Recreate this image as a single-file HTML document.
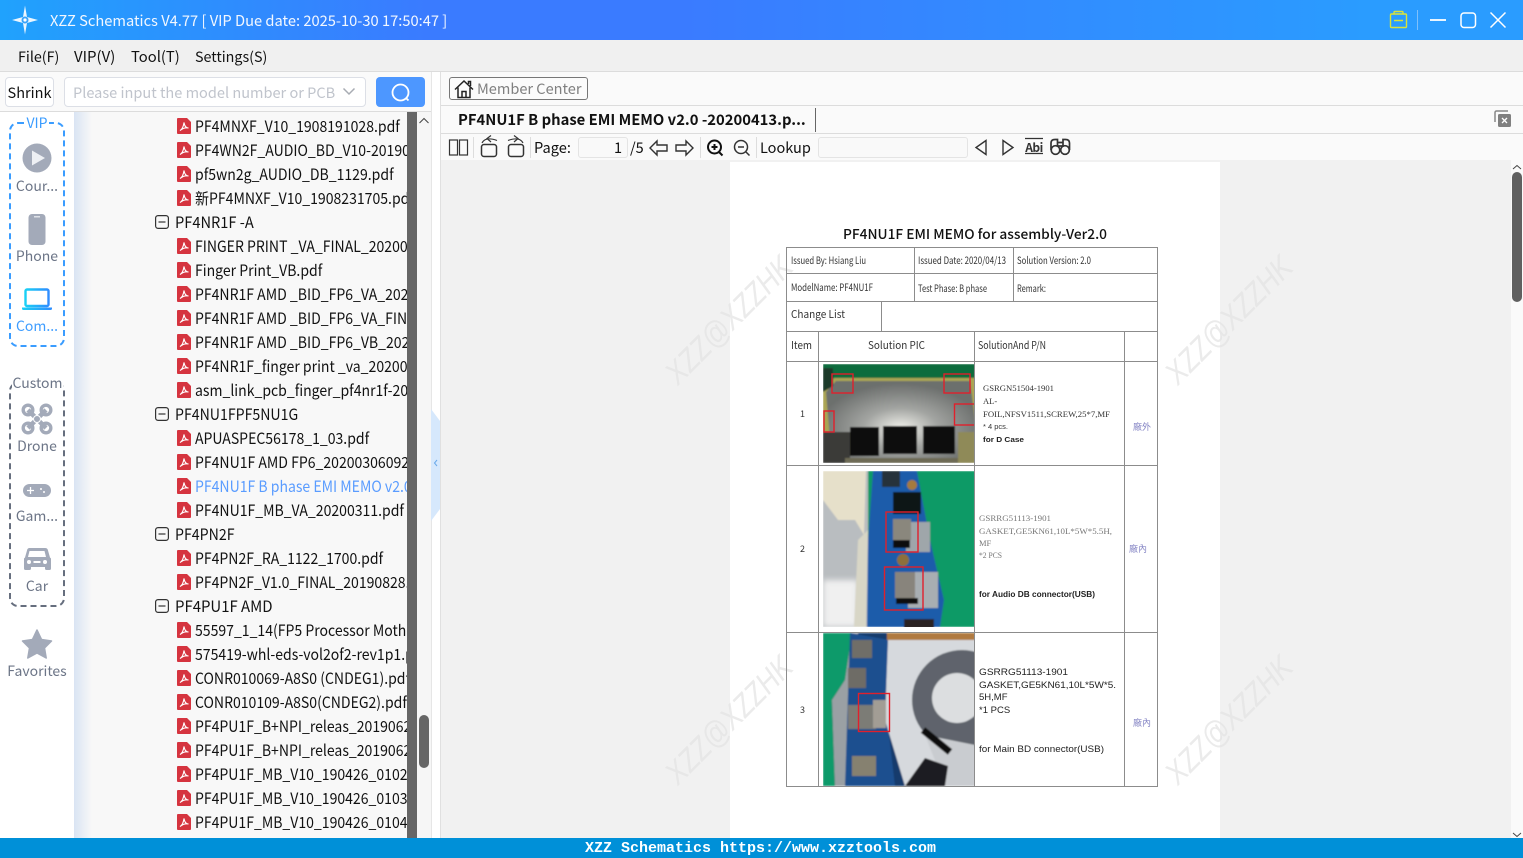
<!DOCTYPE html>
<html><head><meta charset="utf-8"><title>XZZ Schematics</title>
<style>
*{box-sizing:border-box}
html,body{margin:0;padding:0;width:1523px;height:858px;overflow:hidden;background:#fafafa}
body{font-family:"Noto Sans CJK SC","Liberation Sans",sans-serif;color:#111;position:relative}
.a{position:absolute}
.t{position:absolute;white-space:nowrap;line-height:24px;height:24px;font-size:15px}
#title{left:0;top:0;width:1523px;height:40px;background:linear-gradient(90deg,#20a2fd 0,#3a7bff 28%,#3a7bff 45%,#2a9cff 90%,#2a9cff 100%)}
#menu{left:0;top:40px;width:1523px;height:32px;background:#f0f0f0;border-bottom:1px solid #dcdcdc}
#left{left:0;top:72px;width:431px;height:766px;background:#fafafa;overflow:hidden}
#tree{left:74px;top:112px;width:333px;height:726px;background:linear-gradient(90deg,#d9e4f3 0,#f8f8f8 18px);overflow:hidden}
#tree .t{font-size:15.4px;color:#111;transform:scaleX(.912);transform-origin:0 0}
.dash{position:absolute;left:9px;width:56px;border-radius:9px;border:2px dashed}
.lb{position:absolute;left:0;width:74px;text-align:center;font-size:14px;color:#6c7587;line-height:20px;white-space:nowrap}
</style></head><body>
<svg width="0" height="0" style="position:absolute"><defs>
<symbol id="pdf" viewBox="0 0 14 16"><path d="M1 0H10L14 4V15a1 1 0 0 1-1 1H1a1 1 0 0 1-1-1V1a1 1 0 0 1 1-1z" fill="#d5343f"/><path d="M3 12.500C5 11.500 6.500 8 7 4.500 7.500 8 9 10 11.500 10 9 9.500 6 10 3 12.500z" fill="none" stroke="#fff" stroke-width="1.100"/></symbol>
<symbol id="minus" viewBox="0 0 14 14"><rect x=".6" y=".6" width="12.800" height="12.800" rx="2.500" fill="none" stroke="#333" stroke-width="1.200"/><path d="M3.500 7h7" stroke="#333" stroke-width="1.200"/></symbol>
<linearGradient id="lap" x1="0" x2="1"><stop offset="0" stop-color="#18d0f5"/><stop offset="1" stop-color="#2f8dff"/></linearGradient>
<filter id="b0"><feGaussianBlur stdDeviation=".7"/></filter>
<filter id="b1"><feGaussianBlur stdDeviation="1.200"/></filter>
<filter id="b2"><feGaussianBlur stdDeviation="3"/></filter>
<clipPath id="c1"><rect x="823" y="364" width="152" height="99"/></clipPath>
<clipPath id="c2"><rect x="823" y="471" width="152" height="156"/></clipPath>
<clipPath id="c3"><rect x="823" y="633" width="152" height="153"/></clipPath>
<radialGradient id="metal" cx=".5" cy=".58" r=".55"><stop offset="0" stop-color="#f2f2ec"/><stop offset=".45" stop-color="#a3a5a2"/><stop offset="1" stop-color="#6c6f6d"/></radialGradient>
</defs></svg>

<div id="title" class="a"></div>
<svg class="a" style="left:0;top:0" width="60" height="40"><path d="M25 5.500 27 17 38 20 27 23 25 34.500 23 23 12 20 23 17z" fill="#eaf6ff"/><circle cx="25" cy="20" r="3.500" fill="#3aa4fb"/><circle cx="25" cy="20" r="1.600" fill="#fff"/></svg>
<div class="t" style="left:50px;top:9px;color:#f2f7ff;font-size:14.680px">XZZ Schematics V4.77 [ VIP Due date: 2025-10-30 17:50:47 ]</div>
<svg class="a" style="left:1380px;top:0" width="143" height="40" fill="none">
<path d="M11.500 14h14a1 1 0 0 1 1 1v11.500a1 1 0 0 1-1 1h-14a1 1 0 0 1-1-1V15a1 1 0 0 1 1-1zM14 14v-1.500a1 1 0 0 1 1-1h7a1 1 0 0 1 1 1V14M14 20.500h9" stroke="#d9e33a" stroke-width="1.400"/>
<path d="M37.500 10v20" stroke="#7fc0fb" stroke-width="1"/>
<path d="M50 20h16" stroke="#fff" stroke-width="1.800"/>
<rect x="81" y="13" width="14.500" height="14.500" rx="3" stroke="#fff" stroke-width="1.500"/>
<path d="M110.500 12.500 125.500 27.500M125.500 12.500 110.500 27.500" stroke="#fff" stroke-width="1.500"/>
</svg>

<div id="menu" class="a"></div>
<div class="t" style="left:18px;top:45px;font-size:14.300px">File(F)</div>
<div class="t" style="left:74px;top:45px">VIP(V)</div>
<div class="t" style="left:131px;top:45px;font-size:14.800px">Tool(T)</div>
<div class="t" style="left:195px;top:45px;font-size:14.300px">Settings(S)</div>

<div id="left" class="a"></div>
<div class="a" style="left:5px;top:77px;width:49px;height:30px;background:#fff;border:1px solid #dcdfe6;border-radius:4px;text-align:center;font-size:14.500px;line-height:29px">Shrink</div>
<div class="a" style="left:64px;top:77px;width:302px;height:30px;background:#fff;border:1px solid #dcdfe6;border-radius:4px"></div>
<div class="t" style="left:73px;top:81px;color:#c0c4cc;font-size:14.550px">Please input the model number or PCB</div>
<svg class="a" style="left:340px;top:84px" width="18" height="16" fill="none"><path d="M3.500 4.500 9 10 14.500 4.500" stroke="#a8acb3" stroke-width="1.500"/></svg>
<div class="a" style="left:376px;top:77px;width:49px;height:30px;background:#4d97ff;border-radius:4px"></div>
<svg class="a" style="left:388px;top:81px" width="26" height="24" fill="none"><circle cx="12.500" cy="11.500" r="8" stroke="#fff" stroke-width="1.800"/><path d="M18 17l2.500 2.500" stroke="#fff" stroke-width="1.800"/></svg>
<div class="a" style="left:0;top:111px;width:431px;height:1px;background:#dcdcdc"></div>

<!-- sidebar -->
<div class="a" style="left:0;top:112px;width:74px;height:726px;background:#fff"></div>
<div class="dash" style="top:122px;height:225px;border-color:#3a9cff"></div>
<div class="lb" style="top:113px;color:#3a9cff"><span style="background:#fff;padding:0 1px">VIP</span></div>
<div class="dash" style="top:382px;height:225px;border-color:#666e7e"></div>
<div class="lb" style="top:373px;padding-left:1px"><span style="background:#fff">Custom</span></div>
<div class="lb" style="top:176px">Cour...</div>
<div class="lb" style="top:246px">Phone</div>
<div class="lb" style="top:316px;color:#3f9dff">Com...</div>
<div class="lb" style="top:436px">Drone</div>
<div class="lb" style="top:506px">Gam...</div>
<div class="lb" style="top:576px">Car</div>
<div class="lb" style="top:661px">Favorites</div>
<svg class="a" style="left:0;top:112px" width="74" height="726">
<circle cx="37" cy="46" r="14.500" fill="#a3aab9"/><path d="M32 38.500 45 46 32 53.500z" fill="#eef0f4"/>
<rect x="28.500" y="102" width="17" height="31" rx="3.500" fill="#a3aab9"/><rect x="34" y="104" width="6" height="1.500" fill="#dfe2e8"/>
<rect x="25.500" y="177.500" width="23" height="16.500" rx="1.500" fill="none" stroke="url(#lap)" stroke-width="2.400"/><path d="M22 195.500h30v1a1.500 1.500 0 0 1-1.500 1.500h-27A1.500 1.500 0 0 1 22 196.500z" fill="url(#lap)"/>
<g fill="none" stroke="#a3aab9"><path d="M28 298l18 18M46 298l-18 18" stroke-width="4.500"/><circle cx="28" cy="298" r="4.800" stroke-width="3.400"/><circle cx="46" cy="298" r="4.800" stroke-width="3.400"/><circle cx="28" cy="316" r="4.800" stroke-width="3.400"/><circle cx="46" cy="316" r="4.800" stroke-width="3.400"/></g><circle cx="37" cy="307" r="3.500" fill="#a3aab9" stroke="#fff" stroke-width="1"/>
<rect x="23" y="372" width="28" height="13" rx="6.500" fill="#a3aab9"/><path d="M27 378.500h7M30.500 375v7" stroke="#fff" stroke-width="1.300"/><circle cx="41" cy="377" r="1" fill="#fff"/><circle cx="44" cy="380" r="1" fill="#fff"/>
<path d="M29 436h16a3 3 0 0 1 3 2.500l2 7 1 1v10a1.500 1.500 0 0 1-1.500 1.500h-3a1.500 1.500 0 0 1-1.500-1.500V455H31v1.500a1.500 1.500 0 0 1-1.500 1.500h-4A1.500 1.500 0 0 1 24 456.500v-10l1-1 2-7a3 3 0 0 1 2-2.500z" fill="#a3aab9"/><path d="M29.500 439h15l1.500 6H28z" fill="#fff"/><circle cx="29" cy="450" r="2" fill="#fff"/><circle cx="45" cy="450" r="2" fill="#fff"/><rect x="33.500" y="449" width="7" height="2" fill="#fff"/>
<path d="M37 518l4.500 9.500 10 1.500-7 7 1.700 10L37 541l-9.200 5 1.700-10-7-7 10-1.500z" fill="#a3aab9" stroke="#a3aab9" stroke-width="1.500" stroke-linejoin="round"/>
</svg>

<!-- tree -->
<div id="tree" class="a">
<svg class="a" style="left:0;top:0" width="334" height="726">
<use href="#pdf" x="103" y="6" width="14" height="16"/><use href="#pdf" x="103" y="30" width="14" height="16"/><use href="#pdf" x="103" y="54" width="14" height="16"/><use href="#pdf" x="103" y="78" width="14" height="16"/>
<use href="#minus" x="81" y="103" width="14" height="14"/>
<use href="#pdf" x="103" y="126" width="14" height="16"/><use href="#pdf" x="103" y="150" width="14" height="16"/><use href="#pdf" x="103" y="174" width="14" height="16"/><use href="#pdf" x="103" y="198" width="14" height="16"/><use href="#pdf" x="103" y="222" width="14" height="16"/><use href="#pdf" x="103" y="246" width="14" height="16"/><use href="#pdf" x="103" y="270" width="14" height="16"/>
<use href="#minus" x="81" y="295" width="14" height="14"/>
<use href="#pdf" x="103" y="318" width="14" height="16"/><use href="#pdf" x="103" y="342" width="14" height="16"/><use href="#pdf" x="103" y="366" width="14" height="16"/><use href="#pdf" x="103" y="390" width="14" height="16"/>
<use href="#minus" x="81" y="415" width="14" height="14"/>
<use href="#pdf" x="103" y="438" width="14" height="16"/><use href="#pdf" x="103" y="462" width="14" height="16"/>
<use href="#minus" x="81" y="487" width="14" height="14"/>
<use href="#pdf" x="103" y="510" width="14" height="16"/><use href="#pdf" x="103" y="534" width="14" height="16"/><use href="#pdf" x="103" y="558" width="14" height="16"/><use href="#pdf" x="103" y="582" width="14" height="16"/><use href="#pdf" x="103" y="606" width="14" height="16"/><use href="#pdf" x="103" y="630" width="14" height="16"/><use href="#pdf" x="103" y="654" width="14" height="16"/><use href="#pdf" x="103" y="678" width="14" height="16"/><use href="#pdf" x="103" y="702" width="14" height="16"/>
</svg>
<div class="t" style="left:121px;top:2px">PF4MNXF_V10_1908191028.pdf</div>
<div class="t" style="left:121px;top:26px">PF4WN2F_AUDIO_BD_V10-20190820.pdf</div>
<div class="t" style="left:121px;top:50px">pf5wn2g_AUDIO_DB_1129.pdf</div>
<div class="t" style="left:121px;top:74px">新PF4MNXF_V10_1908231705.pdf</div>
<div class="t" style="left:101px;top:98px;transform:scaleX(.95)">PF4NR1F -A</div>
<div class="t" style="left:121px;top:122px">FINGER PRINT _VA_FINAL_20200224.pdf</div>
<div class="t" style="left:121px;top:146px">Finger Print_VB.pdf</div>
<div class="t" style="left:121px;top:170px">PF4NR1F AMD _BID_FP6_VA_20200224.pdf</div>
<div class="t" style="left:121px;top:194px">PF4NR1F AMD _BID_FP6_VA_FINAL.pdf</div>
<div class="t" style="left:121px;top:218px">PF4NR1F AMD _BID_FP6_VB_20200224.pdf</div>
<div class="t" style="left:121px;top:242px">PF4NR1F_finger print _va_20200224.pdf</div>
<div class="t" style="left:121px;top:266px">asm_link_pcb_finger_pf4nr1f-20200224.pdf</div>
<div class="t" style="left:101px;top:290px;transform:scaleX(.918)">PF4NU1FPF5NU1G</div>
<div class="t" style="left:121px;top:314px">APUASPEC56178_1_03.pdf</div>
<div class="t" style="left:121px;top:338px">PF4NU1F AMD FP6_20200306092.pdf</div>
<div class="t" style="left:121px;top:362px;color:#5a9cff">PF4NU1F B phase EMI MEMO v2.0 -20200413.pdf</div>
<div class="t" style="left:121px;top:386px">PF4NU1F_MB_VA_20200311.pdf</div>
<div class="t" style="left:101px;top:410px;transform:scaleX(.92)">PF4PN2F</div>
<div class="t" style="left:121px;top:434px">PF4PN2F_RA_1122_1700.pdf</div>
<div class="t" style="left:121px;top:458px">PF4PN2F_V1.0_FINAL_20190828.pdf</div>
<div class="t" style="left:101px;top:482px;transform:scaleX(.97)">PF4PU1F AMD</div>
<div class="t" style="left:121px;top:506px">55597_1_14(FP5 Processor Motherboard).pdf</div>
<div class="t" style="left:121px;top:530px">575419-whl-eds-vol2of2-rev1p1.pdf</div>
<div class="t" style="left:121px;top:554px">CONR010069-A8S0 (CNDEG1).pdf</div>
<div class="t" style="left:121px;top:578px">CONR010109-A8S0(CNDEG2).pdf</div>
<div class="t" style="left:121px;top:602px">PF4PU1F_B+NPI_releas_20190620.pdf</div>
<div class="t" style="left:121px;top:626px">PF4PU1F_B+NPI_releas_20190621.pdf</div>
<div class="t" style="left:121px;top:650px">PF4PU1F_MB_V10_190426_0102.pdf</div>
<div class="t" style="left:121px;top:674px">PF4PU1F_MB_V10_190426_0103.pdf</div>
<div class="t" style="left:121px;top:698px">PF4PU1F_MB_V10_190426_0104.pdf</div>
</div>
<div class="a" style="left:407px;top:112px;width:10px;height:726px;background:#666"></div>
<div class="a" style="left:417px;top:112px;width:14px;height:726px;background:#f6f6f6"></div>
<div class="a" style="left:419px;top:715px;width:10px;height:53px;border-radius:5px;background:#666"></div>
<svg class="a" style="left:417px;top:112px" width="14" height="16" fill="none"><path d="M2.500 11 7 6.500 11.500 11" stroke="#444" stroke-width="1"/></svg>

<!-- splitter -->
<div class="a" style="left:431px;top:72px;width:10px;height:766px;background:#fff;border-left:1px solid #e6e6e6;border-right:1px solid #e0e0e0"></div>
<svg class="a" style="left:431px;top:405px" width="10" height="120"><path d="M0 4 9 16V104L0 116z" fill="#d6e8fc"/><path d="M6 55 3.500 58 6 61" fill="none" stroke="#6aa9ea" stroke-width="1"/></svg>

<!-- right pane -->
<div class="a" style="left:441px;top:72px;width:1082px;height:88px;background:#fafafa"></div>
<div class="a" style="left:441px;top:105px;width:1082px;height:1px;background:#dcdcdc"></div>
<div class="a" style="left:441px;top:133px;width:1082px;height:1px;background:#dcdcdc"></div>
<div class="a" style="left:449px;top:77px;width:139px;height:23px;background:#fbfbfb;border:1px solid #777;border-radius:3px"></div>
<svg class="a" style="left:453px;top:78px" width="22" height="22" fill="none" stroke="#222" stroke-width="1.500"><path d="M2 11.500 11 3l9 8.500M5 9.500V19.500H17V9.500M9 19.500V13.500H13V19.500M15.500 6V3.500H17.500V8"/></svg>
<div class="t" style="left:477px;top:77px;color:#808080;font-size:14.550px">Member Center</div>
<div class="t" style="left:458px;top:108px;font-weight:700;font-size:14.800px;color:#111">PF4NU1F B phase EMI MEMO v2.0 -20200413.p...</div>
<div class="a" style="left:815px;top:108px;width:1px;height:24px;background:#666"></div>
<svg class="a" style="left:1493px;top:109px" width="20" height="20"><path d="M2 13V3.500A1.500 1.500 0 0 1 3.500 2H15" fill="none" stroke="#888" stroke-width="1.500"/><rect x="5" y="5" width="13" height="13" rx="1.500" fill="#808080"/><path d="M9 9l5 5M14 9l-5 5" stroke="#fff" stroke-width="1.300"/></svg>

<svg class="a" style="left:441px;top:134px" width="640" height="28" fill="none" stroke="#333" stroke-width="1.200">
<rect x="8.500" y="6" width="8" height="15"/><rect x="18.500" y="6" width="8" height="15"/>
<path d="M32.500 3V24M89.500 3V24M259.500 3V24M315.500 3V24" stroke="#ddd" stroke-width="1"/>
<rect x="40.500" y="10.500" width="15" height="12" rx="2.500" stroke-width="1.500"/><path d="M41 9C43 5 48 3.500 56 6.500M50 1.500 46 4.500l4 3.500" stroke-width="1.200"/>
<rect x="67.500" y="10.500" width="15" height="12" rx="2.500" stroke-width="1.500"/><path d="M82 9C80 5 75 3.500 67 6.500M73 1.500 77 4.500l-4 3.500" stroke-width="1.200"/>
<path d="M209 14l7-7v4h10v6h-10v4z" stroke-width="1.400"/><path d="M252 14l-7-7v4h-10v6h10v4z" stroke-width="1.400"/>
<circle cx="273.500" cy="13" r="6.500" stroke="#111" stroke-width="2"/><path d="M278 18l3.500 3.500M270.500 13h6M273.500 10v6" stroke="#111" stroke-width="2"/>
<circle cx="300" cy="13" r="6.500" stroke-width="1.500"/><path d="M305 18l3.500 3.500M297 13h6" stroke-width="1.500"/>
<path d="M545 6.500 535 13.500 545 20.500zM562 6.500 572 13.500 562 20.500z" stroke-width="1.400"/>
<path d="M584 4.500h18M584 19.500h18" stroke-width="1.200"/>
<circle cx="614.500" cy="16" r="4.300" stroke-width="1.700"/><circle cx="624" cy="16" r="4.300" stroke-width="1.700"/>
<path d="M610 16V9Q610 5.500 614 5.500H616.500V13M628.500 16V9Q628.500 5.500 624.500 5.500H622V13M616.500 8.500H622M616.500 12H622" stroke-width="1.700"/>
</svg>
<div class="t" style="left:534px;top:136px;font-size:14.600px">Page:</div>
<div class="a" style="left:578px;top:137px;width:50px;height:21px;background:#f9f9f9;border:1px solid #e4e4e4;border-radius:3px"></div>
<div class="t" style="left:614px;top:136px;font-size:14.500px">1</div>
<div class="t" style="left:630px;top:136px;font-size:14.500px">/5</div>
<div class="t" style="left:760px;top:136px;font-size:14.500px">Lookup</div>
<div class="a" style="left:818px;top:137px;width:150px;height:21px;background:#f9f9f9;border:1px solid #e4e4e4;border-radius:3px"></div>
<div class="t" style="left:1025px;top:136px;font-size:12px;font-weight:700;letter-spacing:-.5px;color:#333;width:18px;text-align:center">Abi</div>

<!-- viewer -->
<div class="a" style="left:441px;top:160px;width:1070px;height:678px;background:#f1f1f1"></div>
<div class="a" style="left:730px;top:162px;width:490px;height:676px;background:#fff"></div>
<div class="a" style="left:1511px;top:160px;width:12px;height:678px;background:#fafafa"></div>
<div class="a" style="left:1512px;top:172px;width:10px;height:130px;border-radius:5px;background:#606060"></div>
<svg class="a" style="left:1511px;top:162px" width="12" height="10" fill="none"><path d="M2 7 6 3.500 10 7" stroke="#444"/></svg>
<svg class="a" style="left:1511px;top:830px" width="12" height="8" fill="none"><path d="M2 3 6 6.500 10 3" stroke="#444"/></svg>

<!-- document -->
<svg class="a" style="left:0;top:0" width="1523" height="858" font-family="'Liberation Sans',sans-serif">
<g font-family="'Liberation Sans',sans-serif" font-size="32" font-style="italic" fill="#e2e2e2" opacity=".7">
<text transform="translate(678,386) rotate(-45)" textLength="165" lengthAdjust="spacingAndGlyphs">XZZ@XZZHK</text>
<text transform="translate(1178,386) rotate(-45)" textLength="165" lengthAdjust="spacingAndGlyphs">XZZ@XZZHK</text>
<text transform="translate(678,786) rotate(-45)" textLength="165" lengthAdjust="spacingAndGlyphs">XZZ@XZZHK</text>
<text transform="translate(1178,786) rotate(-45)" textLength="165" lengthAdjust="spacingAndGlyphs">XZZ@XZZHK</text>
</g>
<text x="843" y="239" font-family="'Noto Sans CJK SC',sans-serif" font-size="13.500" font-weight="500" fill="#111" textLength="264" lengthAdjust="spacingAndGlyphs">PF4NU1F EMI MEMO for assembly-Ver2.0</text>

<!-- photo 1 -->
<g clip-path="url(#c1)">
<g filter="url(#b0)">
<rect x="823" y="364" width="152" height="99" fill="#0d6c3c"/>
<path d="M823 386 834 378H975V463H823z" fill="#aaa552"/>
<path d="M826 392 836 381H970L975 420V463H832z" fill="url(#metal)"/>
<path d="M823 368H833V386L823 392z" fill="#1a3b2a"/>
<path d="M823 432H850V463H823z" fill="#3b3b38"/>
<path d="M958 432H975V463H958z" fill="#8f8a58"/>
<rect x="850" y="427" width="29" height="29" fill="#0b0b0d"/><rect x="883" y="426" width="34" height="28" fill="#0b0b0d"/><rect x="923" y="426" width="32" height="28" fill="#0b0b0d"/>
<path d="M845 458H958V463H845z" fill="#6d6a55"/>
</g>
<g fill="none" stroke="#e0202c" stroke-width="1.400"><rect x="832" y="374" width="21" height="19"/><rect x="944" y="374" width="26" height="19"/><rect x="954.500" y="404" width="21" height="21"/><rect x="824" y="411" width="10" height="21"/></g>
</g>
<!-- photo 2 -->
<g clip-path="url(#c2)">
<g filter="url(#b0)">
<rect x="823" y="471" width="152" height="156" fill="#0f9a66"/>
<path d="M823 471H868V627H823z" fill="#b9bdc0"/>
<path d="M823 471H866L864 535 855 520H838L823 500z" fill="#e6e0ca"/>
<path d="M823 580H858V627H823z" fill="#f0f0f0" filter="url(#b2)"/>
<path d="M873 471H917L930 540 944 600 940 627H867L868 540z" fill="#1d5caa"/>
<path d="M858 540 868 530 866 627H854z" fill="#d8d6c6"/>
<rect x="882" y="471" width="18" height="16" fill="#27303a"/><circle cx="912" cy="485" r="5" fill="#a57a3c"/>
<rect x="893" y="492" width="28" height="22" fill="#111214"/>
<rect x="906" y="522" width="24" height="30" fill="#9fa6aa"/>
<rect x="893" y="519" width="18" height="21" fill="#8a877d"/><rect x="893" y="540" width="17" height="8" fill="#0c0c0e"/>
<circle cx="903" cy="560" r="6" fill="#8d6f3a"/>
<rect x="908" y="572" width="30" height="36" fill="#a8aeb2"/>
<rect x="895" y="572" width="20" height="26" fill="#88847c"/><rect x="896" y="598" width="22" height="6" fill="#0c0c0e"/>
<rect x="904" y="619" width="30" height="9" fill="#2a2320"/>
</g>
<g fill="none" stroke="#e0202c" stroke-width="1.400"><rect x="886" y="512" width="32" height="40"/><rect x="884.500" y="567" width="38.500" height="43"/></g>
</g>
<!-- photo 3 -->
<g clip-path="url(#c3)">
<g filter="url(#b0)">
<rect x="823" y="633" width="152" height="153" fill="#123a6c"/>
<path d="M823 633H852L845 680 832 700 835 786H823z" fill="#0c9a6b"/>
<path d="M832 700 845 680 852 633 858 633 845 786H835z" fill="#9aa0a4"/>
<path d="M845 786 850 633 890 640 885 700 895 786z" fill="#1c4f8f"/>
<rect x="852" y="640" width="20" height="18" fill="#6f6e68"/><rect x="848" y="668" width="18" height="20" fill="#6e6c66"/><rect x="848" y="705" width="28" height="24" fill="#7c7c76"/><rect x="852" y="756" width="24" height="20" fill="#86816f"/>
<path d="M888 640H975V786H905L885 720z" fill="#d6d9dd"/>
<rect x="887" y="633" width="88" height="7" fill="#b07a40"/>
<circle cx="962" cy="700" r="50" fill="#5e646c"/><circle cx="957" cy="698" r="25" fill="#dcdee0"/>
<path d="M925 735 975 745V786H945z" fill="#c9ccd0"/>
<path d="M905 786 925 758 948 766 945 786z" fill="#1e1e20"/>
<rect x="873" y="700" width="13" height="28" fill="#a29d95"/>
<path d="M923 730 950 752" stroke="#111" stroke-width="7"/>
</g>
<rect x="858.500" y="693.500" width="31" height="38" fill="none" stroke="#e0202c" stroke-width="1.400"/>
</g>

<g stroke="#8c8c8c" stroke-width="1" fill="none">
<rect x="786.500" y="247.500" width="371" height="539"/>
<path d="M787 273.500H1157M787 301.500H1157M787 331.500H1157M787 361.500H1157M787 465.500H1157M787 632.500H1157"/>
<path d="M914.500 247V301M1013.500 247V301M881.500 301V331M818.500 331V786M974.500 331V786M1124.500 331V786"/>
</g>

<g fill="#333" font-size="10" font-family="'Noto Sans CJK SC',sans-serif">
<text x="791" y="264" font-size="10" textLength="75" lengthAdjust="spacingAndGlyphs">Issued By: Hsiang Liu</text>
<text x="918" y="264" textLength="88" lengthAdjust="spacingAndGlyphs">Issued Date: 2020/04/13</text>
<text x="1017" y="264" textLength="74" lengthAdjust="spacingAndGlyphs">Solution Version: 2.0</text>
<text x="791" y="291" textLength="82" lengthAdjust="spacingAndGlyphs">ModelName: PF4NU1F</text>
<text x="918" y="292" textLength="69" lengthAdjust="spacingAndGlyphs">Test Phase: B phase</text>
<text x="1017" y="292" textLength="29" lengthAdjust="spacingAndGlyphs">Remark:</text>
<text x="791" y="318" font-size="10.500" textLength="54" lengthAdjust="spacingAndGlyphs">Change List</text>
<text x="791" y="349" font-size="10.500" textLength="21" lengthAdjust="spacingAndGlyphs">Item</text>
<text x="868" y="349" font-size="10.500" textLength="57" lengthAdjust="spacingAndGlyphs">Solution PIC</text>
<text x="978" y="349" font-size="10.500" textLength="68" lengthAdjust="spacingAndGlyphs">SolutionAnd P/N</text>
<text x="800" y="417" font-size="9">1</text><text x="800" y="552" font-size="9">2</text><text x="800" y="713" font-size="9">3</text>
</g>
<g font-family="'Liberation Serif',serif" font-size="8.500" fill="#333">
<text x="983" y="391" textLength="71" lengthAdjust="spacingAndGlyphs">GSRGN51504-1901</text>
<text x="983" y="404">AL-</text>
<text x="983" y="417" textLength="127" lengthAdjust="spacingAndGlyphs">FOIL,NFSV1511,SCREW,25*7,MF</text>
<text x="983" y="429" font-family="'Liberation Sans',sans-serif" font-size="7.500">* 4 pcs.</text>
</g>
<text x="983" y="442" font-family="'Liberation Sans',sans-serif" font-size="7.500" font-weight="700" fill="#222" textLength="41" lengthAdjust="spacingAndGlyphs">for D Case</text>
<g font-family="'Liberation Serif',serif" font-size="8.500" fill="#777">
<text x="979" y="521" textLength="72" lengthAdjust="spacingAndGlyphs">GSRRG51113-1901</text>
<text x="979" y="534" textLength="133" lengthAdjust="spacingAndGlyphs">GASKET,GE5KN61,10L*5W*5.5H,</text>
<text x="979" y="546">MF</text>
<text x="979" y="558" textLength="23" lengthAdjust="spacingAndGlyphs">*2 PCS</text>
</g>
<text x="979" y="597" font-family="'Liberation Sans',sans-serif" font-size="8" font-weight="700" fill="#222" textLength="116" lengthAdjust="spacingAndGlyphs">for Audio DB connector(USB)</text>
<g font-family="'Liberation Sans',sans-serif" font-size="9.500" fill="#222">
<text x="979" y="675" textLength="89" lengthAdjust="spacingAndGlyphs">GSRRG51113-1901</text>
<text x="979" y="688" textLength="137" lengthAdjust="spacingAndGlyphs">GASKET,GE5KN61,10L*5W*5.</text>
<text x="979" y="700">5H,MF</text>
<text x="979" y="713">*1 PCS</text>
<text x="979" y="752" textLength="125" lengthAdjust="spacingAndGlyphs">for Main BD connector(USB)</text>
</g>
<g font-family="'Noto Sans CJK TC',sans-serif" font-size="9" fill="#8484c4">
<text x="1133" y="430">廠外</text><text x="1129" y="552">廠內</text><text x="1133" y="726">廠內</text>
</g>
</svg>

<!-- footer -->
<div class="a" style="left:0;top:838px;width:1523px;height:20px;background:#0090d8"></div>
<div class="t" style="left:585px;top:838px;height:22px;line-height:22px;font-family:'Liberation Mono',monospace;font-size:15px;font-weight:700;color:#fff">XZZ Schematics https://www.xzztools.com</div>
</body></html>
